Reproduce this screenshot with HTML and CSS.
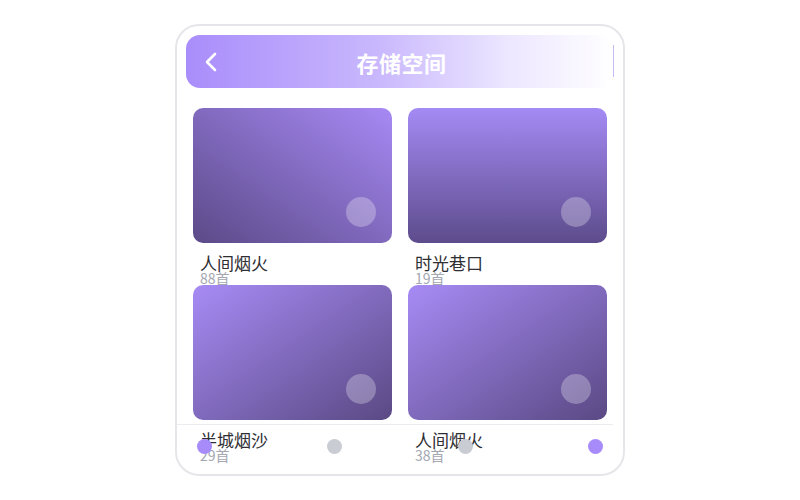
FILE: index.html
```html
<!DOCTYPE html>
<html>
<head>
<meta charset="UTF-8">
<title>存储空间</title>
<link rel="stylesheet" href="styles.css">
</head>
<body>

<div class="phone">
	<div class="header">
		<svg class="back" width="14" height="20" viewBox="0 0 14 20">
			<path d="M11 2 L3 10 L11 18" fill="none" stroke="#fff" stroke-width="2.6" stroke-linecap="round" stroke-linejoin="round"/>
		</svg>
		<h1 class="title">存储空间</h1>
		<span class="bar"></span>
	</div>

	<div class="list">
		<div class="item">
			<div class="cover c1"><span class="dot"></span></div>
			<p class="name">人间烟火</p>
			<p class="count">88首</p>
		</div>
		<div class="item">
			<div class="cover c2"><span class="dot"></span></div>
			<p class="name">时光巷口</p>
			<p class="count">19首</p>
		</div>
		<div class="item">
			<div class="cover c3"><span class="dot"></span></div>
			<p class="name">半城烟沙</p>
			<p class="count">29首</p>
		</div>
		<div class="item">
			<div class="cover c3"><span class="dot"></span></div>
			<p class="name">人间烟火</p>
			<p class="count">38首</p>
		</div>
	</div>

	<!-- 하단 탭 -->
	<div class="tabs">
		<span class="tab on"></span>
		<span class="tab"></span>
		<span class="tab"></span>
		<span class="tab on"></span>
	</div>
</div>

</body>
</html>
```

FILE: styles.css
```css
* {box-sizing: border-box;}
body {margin: 0; background: #fff; font-family: "Noto Sans CJK SC", "Noto Sans", sans-serif;}

.phone {position: relative; width: 450px; height: 452px; margin: 24px auto 0; border: 2px solid #e6e6ea; border-radius: 24px; overflow: hidden; background: #fff;}

.header {position: relative; display: flex; align-items: center; justify-content: center; height: 53px; margin: 9px 10px 0 9px; border-radius: 14px; background: linear-gradient(to right, #a98dfb, #c9b8fd 45%, #ece6ff 75%, #fff);}
.back {position: absolute; left: 18px; top: 17px;}
.title {margin: 0 0 0 4px; color: #fff; font-size: 22px; font-weight: bold; letter-spacing: 0.5px;}
.bar {position: absolute; right: -1px; top: 10px; width: 1px; height: 32px; background: #c7bbf5;}

.list {display: grid; grid-template-columns: 199px 199px; column-gap: 16px; padding: 20px 16px 0;}
.item {height: 177px;}
.cover {position: relative; height: 135px; border-radius: 10px;}
.c1 {background: linear-gradient(to bottom left, #a789f4, #5b4a88);}
.c2 {background: linear-gradient(to bottom, #a48af4, #5d4c8c);}
.c3 {background: linear-gradient(to bottom right, #a78bf5, #5a4984);}
.dot {position: absolute; right: 16px; bottom: 16px; width: 30px; height: 30px; border-radius: 50%; background: rgba(255, 255, 255, 0.28);}

.name {margin: 11px 0 0 7px; font-size: 17px; line-height: 17px; color: #2e2e33;}
.count {margin: 0 0 0 7px; font-size: 14px; line-height: 14px; color: #a3a7b0;}

.tabs {position: absolute; left: 0; right: 10px; bottom: 0; height: 50px; display: flex; justify-content: space-between; padding: 14px 10px 0 20px; border-top: 1px solid #ececf0;}
.tab {width: 15px; height: 15px; border-radius: 50%; background: #c9ccd3;}
.tab.on {background: #a78bfa;}
```
